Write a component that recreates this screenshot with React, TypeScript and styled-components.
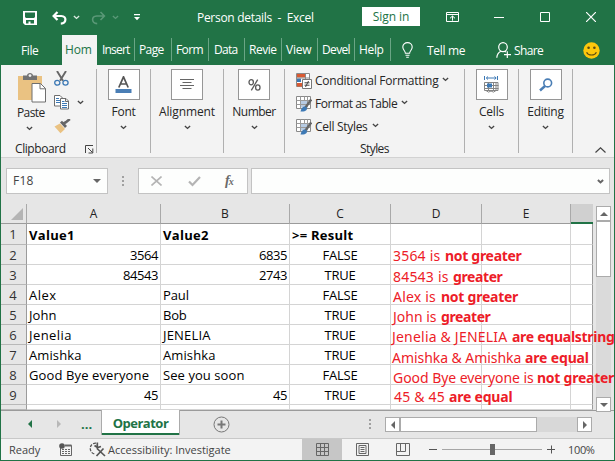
import React from "react";
import styled, { createGlobalStyle, css } from "styled-components";

const GREEN = "#217346";

const GlobalStyle = createGlobalStyle`
  * { box-sizing: border-box; }
  body { margin: 0; overflow: hidden; }
  svg { display: block; flex: none; }
`;

const Window = styled.div`
  width: 615px;
  height: 461px;
  display: flex;
  flex-direction: column;
  border: solid ${GREEN};
  border-width: 0 1px 1px;
  background: #e6e6e6;
  color: #262626;
  font: 12px/20px "Open Sans", "Noto Sans", sans-serif;
  overflow: hidden;
`;

const Text = styled.span<{ $ls?: number; $w?: number; $bold?: boolean }>`
  display: inline-block;
  white-space: pre;
  flex: none;
  letter-spacing: ${(p) => p.$ls ?? 0}px;
  ${(p) => p.$w !== undefined && css`width: ${p.$w}px;`}
  ${(p) => p.$bold && css`font-weight: 700;`}
`;

const Gap = styled.div<{ $w: number }>`
  flex: none;
  width: ${(p) => p.$w}px;
`;

/* ---------- title bar ---------- */
const TitleBar = styled.header`
  height: 35px;
  flex: none;
  display: flex;
  align-items: center;
  padding-left: 22px;
  background: ${GREEN};
  color: #fff;
`;
const SignIn = styled.button`
  width: 58px;
  height: 19px;
  margin: 0;
  padding: 0;
  border: 0;
  flex: none;
  align-self: flex-start;
  margin-top: 7px;
  background: #fff;
  color: ${GREEN};
  font: inherit;
  line-height: 19px;
`;
const WindowButtons = styled.div`
  display: flex;
  align-items: center;
  height: 33px;
  align-self: flex-start;
  margin-left: 26px;
`;

/* ---------- ribbon tabs ---------- */
const Tabs = styled.nav`
  height: 30px;
  flex: none;
  display: flex;
  align-items: center;
  background: ${GREEN};
  color: #fff;
  line-height: 29px;
`;
const Tab = styled.div<{ $w: number; $pad: number; $active?: boolean }>`
  width: ${(p) => p.$w}px;
  height: 30px;
  flex: none;
  padding-left: ${(p) => p.$pad}px;
  ${(p) =>
    p.$active
      ? css`background: #f3f3f3; color: ${GREEN};`
      : css`background: linear-gradient(#6aa585, #6aa585) right 3px / 1px 23px no-repeat;`}
`;
const FileTab = styled.div`
  width: 61px;
  padding-left: 20px;
`;

/* ---------- ribbon ---------- */
const Ribbon = styled.section`
  height: 93px;
  flex: none;
  display: flex;
  background: #f3f3f3;
  border-bottom: 1px solid #d2d2d2;
  padding-top: 4px;
`;
const Group = styled.div<{ $w: number }>`
  width: ${(p) => p.$w}px;
  height: 84px;
  flex: none;
  border-right: 1px solid #b0b0b0;
  display: flex;
  flex-direction: column;
  align-items: center;
`;
const IconBox = styled.div`
  width: 32px;
  height: 31px;
  border: 1px solid #969696;
  background: #fff;
  display: grid;
  place-items: center;
  flex: none;
`;
const GroupLabel = styled.div`
  height: 20px;
  margin: 2px 0 3px;
  display: flex;
  justify-content: center;
`;
const ClipboardBody = styled.div`
  display: flex;
  flex: none;
  width: 100%;
  height: 71px;
  padding-left: 15px;
`;
const PasteButton = styled.div`
  width: 31px;
  display: flex;
  flex-direction: column;
  align-items: flex-start;
  padding: 3px 0 0 1px;
`;
const PasteChevron = styled.div`
  margin: 3px 0 0 9px;
`;
const SmallTools = styled.div`
  display: flex;
  flex-direction: column;
  gap: 9px;
  padding: 2px 0 0 7px;
`;
const ToolRow = styled.div`
  display: flex;
  align-items: center;
  gap: 7px;
  height: 15px;
`;
const GroupFooter = styled.div`
  display: flex;
  flex: none;
  align-items: center;
  width: 100%;
  height: 18px;
  padding-left: 14px;
  gap: 19px;
`;
const StyleList = styled.div`
  display: flex;
  flex: none;
  flex-direction: column;
  width: 100%;
  padding: 0 0 0 11px;
  height: 70px;
`;
const StyleRow = styled.div`
  display: flex;
  align-items: center;
  height: 23px;
  gap: 3px;
  line-height: 19px;
`;
const StyleChevron = styled.div`
  padding: 0 0 2px 1px;
`;
const Collapse = styled.div`
  flex: 1;
  display: flex;
  align-items: flex-end;
  justify-content: flex-end;
  padding: 0 8px 4px 0;
`;

/* ---------- formula bar ---------- */
const FormulaBar = styled.section`
  height: 46px;
  flex: none;
  display: flex;
  padding: 10px 4px 0 5px;
  align-items: flex-start;
`;
const Field = styled.div<{ $w: number }>`
  width: ${(p) => p.$w}px;
  height: 26px;
  flex: none;
  border: 1px solid #c3c3c3;
  background: #fdfefd;
  display: flex;
  align-items: center;
  padding-left: 6px;
  color: #444;
`;
const Dots = styled.div<{ $w: number }>`
  width: ${(p) => p.$w}px;
  height: 26px;
  display: grid;
  place-items: center;
  flex: none;
`;
const Fx = styled.span`
  font: italic 700 14px/20px "Liberation Serif", serif;
  color: #6a6a6a;
  letter-spacing: -1px;
  small { font-size: 10px; }
`;

/* ---------- sheet ---------- */
const SheetArea = styled.section`
  position: relative;
  height: 206px;
  flex: none;
  display: flex;
`;
const Grid = styled.div`
  width: 592px;
  height: 206px;
  display: grid;
  grid-template-columns: 26px 134px 129px 101px 91px 89px 22px;
  grid-template-rows: 20px 21px repeat(8, 20px) 5px;
  overflow: hidden;
  font-size: 13px;
  color: #000;
`;
const HeadCell = styled.div<{ $selected?: boolean }>`
  text-align: center;
  line-height: 19px;
  font-size: 12px;
  color: #222;
  border-bottom: 1px solid #9b9b9b;
  border-right: 1px solid #a9a9a9;
  ${(p) => p.$selected && css`background: #d0d0d0; border-bottom: 2px solid ${GREEN}; border-right: 0;`}
`;
const Corner = styled(HeadCell)`
  padding: 4px 0 0 10px;
`;
const RowHead = styled.div`
  text-align: center;
  border-bottom: 1px solid #b8b8b8;
  border-right: 1px solid #9b9b9b;
  color: #333;
  line-height: 21px;
  padding-right: 1px;
`;
const Cell = styled.div<{ $align?: string; $last?: boolean; $bold?: boolean }>`
  background: #fff;
  border-right: 1px solid ${(p) => (p.$last ? "#9b9b9b" : "#d4d4d4")};
  border-bottom: 1px solid #d4d4d4;
  text-align: ${(p) => p.$align ?? "left"};
  padding: 0 2px;
  line-height: ${(p) => (p.$bold ? 22 : 20)}px;
  white-space: nowrap;
  overflow: hidden;
  font-weight: ${(p) => (p.$bold ? 700 : 400)};
`;
const ScrollColumn = styled.div`
  width: 15px;
  height: 206px;
  margin: 2px 0 0 3px;
  display: flex;
  flex-direction: column;
  background: #dadada;
`;
const ScrollButton = styled.div<{ $w?: number; $h?: number }>`
  width: ${(p) => p.$w ?? 15}px;
  height: ${(p) => p.$h ?? 15}px;
  border: 1px solid #ababab;
  background: #fff;
  display: grid;
  place-items: center;
  flex: none;
`;
const Spacer = styled.div`
  flex: 1;
`;
const Notes = styled.div`
  position: absolute;
  left: 391px;
  top: 42px;
  color: #ed1c28;
  font: 14px/20px "Noto Sans", sans-serif;
`;
const Note = styled.div<{ $x: number; $h: number }>`
  padding-left: ${(p) => p.$x}px;
  height: ${(p) => p.$h}px;
  white-space: nowrap;
`;

/* ---------- sheet tabs ---------- */
const SheetTabs = styled.section`
  height: 28px;
  flex: none;
  display: flex;
  align-items: flex-start;
  border-top: 1px solid #9b9b9b;
  padding-left: 25px;
`;
const Middle = styled.div`
  display: flex;
  align-items: center;
  height: 26px;
`;
const Ellipsis = styled.div`
  width: 20px;
  color: ${GREEN};
  font-weight: 700;
  line-height: 22px;
  font-size: 13px;
`;
const SheetTab = styled.div`
  width: 79px;
  height: 25px;
  margin-top: -1px;
  border: 1px solid #ababab;
  border-width: 0 1px;
  background: #fff linear-gradient(${GREEN}, ${GREEN}) 0 100% / 100% 2px no-repeat;
  color: ${GREEN};
  text-align: center;
  font-size: 13px;
  line-height: 26px;
`;
const ScrollRow = styled.div`
  display: flex;
  width: 207px;
  height: 15px;
  margin: 6px 0 0 14px;
  background: #d8d8d8;
`;

/* ---------- status bar ---------- */
const StatusBar = styled.footer`
  height: 22px;
  flex: none;
  display: flex;
  align-items: center;
  border-top: 1px solid #c8c8c8;
  background: #f3f3f3;
  padding-left: 8px;
  font-size: 11px;
  line-height: 18px;
  color: #444;
`;
const ActiveView = styled.div`
  width: 40px;
  height: 21px;
  background: #c6c6c6;
  display: grid;
  place-items: center;
`;
const ZoomTrack = styled.div`
  width: 100px;
  height: 11px;
  background: linear-gradient(#a6a6a6, #a6a6a6) 0 50% / 100% 1px no-repeat;
  display: flex;
  justify-content: center;
`;
const ZoomThumb = styled.div`
  width: 5px;
  height: 11px;
  background: #666;
`;

/* ---------- icons ---------- */
const Chevron = ({ color = "#444", w = 1.4 }: { color?: string; w?: number }) => (
  <svg width="7" height="5" viewBox="0 0 7 5" fill="none" stroke={color} strokeWidth={w}>
    <path d="M.9 1 3.5 3.4 6.1 1" />
  </svg>
);
const Triangle = ({ dir, color = "#666" }: { dir: "up" | "down" | "left" | "right"; color?: string }) => {
  const d = { up: "M0 6 4 2 8 6z", down: "M0 2 4 6 8 2z", left: "M6 0 2 4 6 8z", right: "M2 0 6 4 2 8z" }[dir];
  return (
    <svg width="8" height="8" viewBox="0 0 8 8" fill={color}>
      <path d={d} />
    </svg>
  );
};
const SaveIcon = () => (
  <svg width="14" height="14" viewBox="0 0 14 14" fill="#fff">
    <path fillRule="evenodd" d="M0 0H14V14H2L0 12zM2 1.500V6L3 7H11L12 6V1.500zM3 9V12.500H5.500V10.500H7.500V12.500H11V9z" />
  </svg>
);
const UndoIcon = ({ flip }: { flip?: boolean }) => (
  <svg width="15" height="14" viewBox="0 0 15 14" fill="none" stroke={flip ? "#5a9877" : "#fff"} strokeWidth={flip ? 1.6 : 2.2}>
    <g transform={flip ? "matrix(-1 0 0 1 15 0)" : undefined}>
      <path d="M5.5 1 1.6 5 5.5 9M2 5H9.2C15 5.4 14.7 12.2 8.8 12.6" />
    </g>
  </svg>
);
const MoreIcon = () => (
  <svg width="6" height="7" viewBox="0 0 6 7" fill="#fff">
    <path d="M0 0H6V1.2H0zM0 3H6L3 6.3z" />
  </svg>
);
const RibbonIcon = () => (
  <svg width="13" height="10" viewBox="0 0 13 10" fill="none" stroke="#fff">
    <path d="M.5.5h12v9H.5zM.5 2.5h12M6.5 8.7V4M4 6.3 6.5 4 9 6.3" />
  </svg>
);
const BulbIcon = () => (
  <svg width="11" height="16" viewBox="0 0 11 16" fill="none" stroke="#fff" strokeWidth="1.1">
    <path d="M3.4 11.3C3.3 8.8.8 8 .8 5a4.7 4.4 0 0 1 9.4 0c0 3-2.5 3.8-2.6 6.3zM3.5 13.3h4M4.2 15.2h2.6" />
  </svg>
);
const ShareIcon = () => (
  <svg width="16" height="17" viewBox="0 0 16 17" fill="none" stroke="#fff" strokeWidth="1.2">
    <ellipse cx="7" cy="5.1" rx="4.3" ry="4.5" />
    <path d="M.8 15.8C1 12 2.5 10.4 4.8 9.2M8.8 9.4 10 10M11.3 9.2V16M8 12.6h7" />
  </svg>
);
const Smiley = () => (
  <svg width="17" height="17" viewBox="0 0 17 17">
    <circle cx="8.5" cy="8.5" r="8.2" fill="#fdc70c" />
    <circle cx="5.6" cy="5.8" r="1.3" fill="#5b4a12" />
    <circle cx="11.4" cy="5.8" r="1.3" fill="#5b4a12" />
    <path d="M3.6 10.2C5.4 14 11.6 14 13.4 10.2" fill="none" stroke="#5b4a12" strokeWidth="1.1" />
  </svg>
);
const PasteIcon = () => (
  <svg width="29" height="31" viewBox="0 0 29 31">
    <path d="M1 4h24v24H1z" fill="#eac282" />
    <path d="M6 8V3.5h4C10 0 16 0 16 3.5h4V8z" fill="#737373" />
    <circle cx="13" cy="3.6" r="1.4" fill="#f3f3f3" />
    <path d="M15 11.5h8.5l5 5V30H15z" fill="#fff" stroke="#6e6e6e" />
    <path d="M23 11.5v5.3h5.5" fill="none" stroke="#6e6e6e" />
  </svg>
);
const CutIcon = () => (
  <svg width="15" height="15" viewBox="0 0 15 15" fill="none">
    <path d="M3 0 9 9.8M12 0 6 9.8" stroke="#666" strokeWidth="1.9" />
    <ellipse cx="3.3" cy="11.8" rx="2.6" ry="2.4" stroke="#3d79b5" strokeWidth="1.3" />
    <ellipse cx="11.5" cy="11.8" rx="2.6" ry="2.4" stroke="#3d79b5" strokeWidth="1.3" />
  </svg>
);
const CopyIcon = () => (
  <svg width="16" height="15" viewBox="0 0 16 15" fill="#fff" stroke="#6e6e6e">
    <path d="M.5.5H6L8.5 3v8h-8z" />
    <path d="M2 3.5h3M2 5.5h4M2 7.5h4" stroke="#3d79b5" />
    <path d="M6.5 3.5H12L14.5 6v8h-8zM11.5 3.5v3h3" />
    <path d="M8 6.5h2.5M8 8.5h5M8 10.5h5M8 12.5h5" stroke="#3d79b5" />
  </svg>
);
const BrushIcon = () => (
  <svg width="17" height="15" viewBox="0 0 17 15">
    <path d="M.5 7.5 6 4.5 11 10 6.5 14.200z" fill="#eac282" />
    <path d="M6 3.5 8 1.8 13 7 11 9z" fill="#666" />
    <path d="M9.5 4.5 12 3.200 15.800 0" fill="none" stroke="#666" strokeWidth="2.6" />
  </svg>
);
const LauncherIcon = () => (
  <svg width="9" height="9" viewBox="0 0 9 9" fill="none" stroke="#444">
    <path d="M.5 8V.5H8M3 3l4.5 4.5M7.8 3.5v4.5H3.5" />
  </svg>
);
const FontIcon = () => (
  <svg width="17" height="18" viewBox="0 0 17 18">
    <path d="M3.8 11.5 8.5.8l4.700 10.700M5.4 8h6.2" fill="none" stroke="#555" strokeWidth="1.7" />
    <path d="M.5 13h16v4h-16z" fill="#4a7eb5" />
  </svg>
);
const AlignIcon = () => (
  <svg width="14" height="11" viewBox="0 0 14 11" stroke="#666">
    <path d="M0 .5h14M2.5 3.5h9M0 6.5h14M2.5 9.5h9" />
  </svg>
);
const PercentIcon = () => (
  <svg width="13" height="12" viewBox="0 0 13 12" fill="none" stroke="#5a5a5a" strokeWidth="1.3">
    <ellipse cx="3.2" cy="3.3" rx="2.2" ry="2.6" />
    <ellipse cx="9.8" cy="8.5" rx="2.2" ry="2.6" />
    <path d="M9.7.7 3.3 11.3" />
  </svg>
);
const CondIcon = () => (
  <svg width="16" height="16" viewBox="0 0 16 16">
    <path d="M.5.5h13v13H.5z" fill="#fff" stroke="#8a8a8a" />
    <path d="M1 1h8v3.5H1z" fill="#d85a33" />
    <path d="M1 5.5h4v3.5H1z" fill="#3d79b5" />
    <path d="M1 10h5v3.5H1z" fill="#d85a33" />
    <path d="M9.5 1v5M.5 5h13" stroke="#8a8a8a" fill="none" />
    <path d="M6.5 6.5h9v9h-9z" fill="#fff" stroke="#777" />
    <path d="M8.5 9.8h5M8.5 12.2h5M12.5 8 9.5 14" stroke="#444" fill="none" />
  </svg>
);
const TableIcon = () => (
  <svg width="16" height="16" viewBox="0 0 16 16">
    <path d="M.5.5h14v12H.5z" fill="#fff" stroke="#8a8a8a" />
    <path d="M4 4.5h8v7H4z" fill="#b7cbe3" />
    <path d="M.5 4.5h14M.5 8.5h14M4.5.5v12M8.5.5v4M11.5.5v8" stroke="#9a9a9a" fill="none" />
    <path d="M9.5 11.5 15.2 3.5" stroke="#666" strokeWidth="2.4" />
    <path d="M4.5 15.5C5.5 11.5 7.5 9 10.5 11.3 12 14 9.5 16 4.5 15.5z" fill="#3d79b5" />
  </svg>
);
const CellsIcon = () => (
  <svg width="15" height="17" viewBox="0 0 15 17" fill="none">
    <path d="M.5 0v4M13.5 0v4M2.5 2h9.500M4 .5 2.3 2 4 3.5M10.5.5 12.2 2l-1.700 1.500" stroke="#3d79b5" />
    <path d="M.5 6.5h13.500v8H.5zM.5 9.5h14M.5 12.5h14M4.5 6.5v8M9.5 6.5v8M12 6.5v8M2 14.5q2.5 3 5 .5 2.5 2.5 5-.5" stroke="#858585" />
    <path d="M3 7.500h5v4H3z" fill="#3d79b5" />
  </svg>
);
const SearchIcon = () => (
  <svg width="14" height="14" viewBox="0 0 14 14" fill="none" stroke="#4a7eb5">
    <circle cx="8.7" cy="5" r="3.9" strokeWidth="1.6" />
    <path d="M6 8 1 12.5" strokeWidth="2.4" />
  </svg>
);
const VDots = ({ color = "#a0a0a0" }: { color?: string }) => (
  <svg width="2" height="10" viewBox="0 0 2 10" fill={color}>
    <path d="M0 0h2v2H0zM0 4h2v2H0zM0 8h2v2H0z" />
  </svg>
);
const AccessIcon = () => (
  <svg width="17" height="15" viewBox="0 0 17 15" fill="none" stroke="#555">
    <path d="M7 1.2C3 1 1 4 1.3 7c.2 2.5 2 4.5 4.2 5" strokeDasharray="3 1.3" strokeWidth="1.3" />
    <path d="M8.3.5v6M5.5 3.5l3 2 3.5-1M8 6.5 16 14M14.5 6.5 7.5 14" strokeWidth="1.7" />
  </svg>
);
const MacroIcon = () => (
  <svg width="13" height="13" viewBox="0 0 13 13" fill="none" stroke="#666">
    <path d="M1.500 5v7.500h11v-10H6" />
    <path d="M6 2.5h6.5" strokeWidth="2" />
    <path d="M3 6.5h8M3 8.500h8M3 10.500h8" strokeDasharray="2 1" />
    <circle cx="3" cy="3" r="2.8" fill="#555" stroke="none" />
  </svg>
);

type TabDef = { label: string; w: number; pad: number; ls: number };
const tabs: TabDef[] = [
  { label: "Insert", w: 37, pad: 4, ls: -0.8 },
  { label: "Page", w: 37, pad: 4, ls: -0.6 },
  { label: "Form", w: 37, pad: 4, ls: -0.6 },
  { label: "Data", w: 36, pad: 5, ls: -0.7 },
  { label: "Revie", w: 37, pad: 4, ls: -0.45 },
  { label: "View", w: 36, pad: 4, ls: -0.25 },
  { label: "Devel", w: 37, pad: 4, ls: -0.65 },
  { label: "Help", w: 36, pad: 4, ls: -0.35 },
];

const BoxGroup = ({ w, label, ls, children }: { w: number; label: string; ls: number; children: React.ReactNode }) => (
  <Group $w={w}>
    <IconBox>{children}</IconBox>
    <GroupLabel>
      <Text $ls={ls}>{label}</Text>
    </GroupLabel>
    <Chevron />
  </Group>
);

type Val = [string, number];
const rows: [Val, Val, Val][] = [
  [["3564", -0.45], ["6835", -0.45], ["FALSE", -0.2]],
  [["84543", -0.45], ["2743", -0.45], ["TRUE", -0.2]],
  [["Alex", 0.45], ["Paul", -0.1], ["FALSE", -0.2]],
  [["John", 0.1], ["Bob", -0.25], ["TRUE", -0.2]],
  [["Jenelia", 0.45], ["JENELIA", 0.2], ["TRUE", -0.2]],
  [["Amishka", 0.1], ["Amishka", 0.1], ["TRUE", -0.2]],
  [["Good Bye everyone", 0.12], ["See you soon", 0.07], ["FALSE", -0.2]],
  [["45", -0.45], ["45", -0.45], ["TRUE", -0.2]],
];

type NoteDef = { a: string; w: number; als: number; b: string; bls: number; x: number; h: number };
const notes: NoteDef[] = [
  { a: "3564 is ", w: 52, als: 0.2, b: "not greater", bls: -0.3, x: 1, h: 21 },
  { a: "84543 is ", w: 60, als: 0.2, b: "greater", bls: -0.4, x: 1, h: 20 },
  { a: "Alex is ", w: 48, als: 0.2, b: "not greater", bls: -0.25, x: 1, h: 20 },
  { a: "John is ", w: 48, als: 0, b: "greater", bls: -0.4, x: 1, h: 20 },
  { a: "Jenelia & JENELIA ", w: 120, als: 0.2, b: "are equalstring", bls: -0.27, x: 0, h: 21 },
  { a: "Amishka & Amishka ", w: 133, als: -0.05, b: "are equal", bls: -0.15, x: 0, h: 20 },
  { a: "Good Bye everyone is ", w: 144, als: -0.05, b: "not greater", bls: -0.25, x: 1, h: 19 },
  { a: "45 & 45 ", w: 55, als: 0.2, b: "are equal", bls: -0.2, x: 2, h: 20 },
];

export default function App() {
  return (
    <>
      <GlobalStyle />
      <Window>
        <TitleBar>
          <SaveIcon />
          <Gap $w={15} />
          <UndoIcon />
          <Gap $w={6} />
          <Chevron color="#dcebe2" />
          <Gap $w={11} />
          <UndoIcon flip />
          <Gap $w={6} />
          <Chevron color="#5a9877" />
          <Gap $w={15} />
          <MoreIcon />
          <Gap $w={57} />
          <Text $ls={-0.3} $w={165}>{"Person details  -  Excel"}</Text>
          <SignIn>
            <Text $ls={-0.05}>Sign in</Text>
          </SignIn>
          <WindowButtons>
            <RibbonIcon />
            <Gap $w={35} />
            <svg width="10" height="10" stroke="#fff"><path d="M0 5.5h10" /></svg>
            <Gap $w={36} />
            <svg width="10" height="10" stroke="#fff" fill="none"><path d="M.5.5h9v9h-9z" /></svg>
            <Gap $w={36} />
            <svg width="10" height="10" stroke="#fff" strokeWidth="1.2"><path d="M0 0 10 10M10 0 0 10" /></svg>
          </WindowButtons>
        </TitleBar>

        <Tabs>
          <FileTab><Text $ls={-0.4}>File</Text></FileTab>
          <Tab $w={35} $pad={3} $active>
            <Text $ls={-0.2}>Hom</Text>
          </Tab>
          <Gap $w={1} />
          {tabs.map((t) => (
            <Tab key={t.label} $w={t.w} $pad={t.pad}>
              <Text $ls={t.ls}>{t.label}</Text>
            </Tab>
          ))}
          <Gap $w={11} />
          <BulbIcon />
          <Gap $w={14} />
          <Text $ls={-0.3} $w={69}>Tell me</Text>
          <ShareIcon />
          <Gap $w={2} />
          <Text $ls={-0.65} $w={69}>Share</Text>
          <Smiley />
        </Tabs>

        <Ribbon>
          <Group $w={96}>
            <ClipboardBody>
              <PasteButton>
                <PasteIcon />
                <Text $ls={-0.6}>Paste</Text>
                <PasteChevron><Chevron /></PasteChevron>
              </PasteButton>
              <SmallTools>
                <ToolRow><CutIcon /></ToolRow>
                <ToolRow><CopyIcon /><Chevron /></ToolRow>
                <ToolRow><BrushIcon /></ToolRow>
              </SmallTools>
            </ClipboardBody>
            <GroupFooter>
              <Text $ls={-0.43}>Clipboard</Text>
              <LauncherIcon />
            </GroupFooter>
          </Group>
          <BoxGroup w={54} label="Font" ls={-0.25}><FontIcon /></BoxGroup>
          <BoxGroup w={73} label="Alignment" ls={-0.1}><AlignIcon /></BoxGroup>
          <BoxGroup w={61} label="Number" ls={-0.5}><PercentIcon /></BoxGroup>
          <Group $w={180}>
            <StyleList>
              <StyleRow><CondIcon /><Text $ls={-0.24}>Conditional Formatting</Text><StyleChevron><Chevron /></StyleChevron></StyleRow>
              <StyleRow><TableIcon /><Text $ls={-0.48}>Format as Table</Text><StyleChevron><Chevron /></StyleChevron></StyleRow>
              <StyleRow><TableIcon /><Text $ls={-0.3}>Cell Styles</Text><StyleChevron><Chevron /></StyleChevron></StyleRow>
            </StyleList>
            <Text $ls={-0.6}>Styles</Text>
          </Group>
          <BoxGroup w={54} label="Cells" ls={-0.2}><CellsIcon /></BoxGroup>
          <BoxGroup w={54} label="Editing" ls={-0.25}><SearchIcon /></BoxGroup>
          <Collapse>
            <svg width="11" height="6" fill="none" stroke="#444" strokeWidth="1.2"><path d="M.5 5.5 5.5.8l5 4.7" /></svg>
          </Collapse>
        </Ribbon>

        <FormulaBar>
          <Field $w={102}>
            <Text $ls={0.2} $w={80}>F18</Text>
            <Triangle dir="down" />
          </Field>
          <Dots $w={30}><VDots /></Dots>
          <Field $w={110}>
            <Gap $w={6} />
            <svg width="11" height="10" stroke="#b4b4b4" strokeWidth="1.6"><path d="M.5.5 10.5 9.5M10.5.5.5 9.5" /></svg>
            <Gap $w={26} />
            <svg width="13" height="11" stroke="#b4b4b4" strokeWidth="2.2" fill="none"><path d="M1 5.5 4.5 9 12 1" /></svg>
            <Gap $w={24} />
            <Fx>f<small>x</small></Fx>
          </Field>
          <Gap $w={3} />
          <Field $w={359}>
            <Gap $w={339} />
            <Chevron color="#666" w={2} />
          </Field>
        </FormulaBar>

        <SheetArea>
          <Grid>
            <Corner>
              <svg width="12" height="12" fill="#b4b4b4"><path d="M12 0V12H0z" /></svg>
            </Corner>
            {["A", "B", "C", "D", "E"].map((c) => <HeadCell key={c}>{c}</HeadCell>)}
            <HeadCell $selected />
            <RowHead>1</RowHead>
            <Cell $bold><Text $ls={0.3}>Value1</Text></Cell>
            <Cell $bold><Text $ls={0.3}>Value2</Text></Cell>
            <Cell $bold><Text $ls={0.25}>{">= Result"}</Text></Cell>
            <Cell />
            <Cell />
            <Cell $last />
            {rows.map((r, i) => (
              <React.Fragment key={i}>
                <RowHead>{i + 2}</RowHead>
                {r.map(([text, ls], c) => (
                  <Cell key={c} $align={c === 2 ? "center" : /^\d/.test(text) ? "right" : "left"}>
                    <Text $ls={ls}>{text}</Text>
                  </Cell>
                ))}
                <Cell />
                <Cell />
                <Cell $last />
              </React.Fragment>
            ))}
            <RowHead />
            <Cell /><Cell /><Cell /><Cell /><Cell /><Cell $last />
          </Grid>
          <ScrollColumn>
            <ScrollButton><Triangle dir="up" /></ScrollButton>
            <ScrollButton $h={56} />
            <Spacer />
            <ScrollButton><Triangle dir="down" /></ScrollButton>
          </ScrollColumn>
          <Notes>
            {notes.map((n, i) => (
              <Note key={i} $x={n.x} $h={n.h}>
                <Text $ls={n.als} $w={n.w}>{n.a}</Text>
                <Text $bold $ls={n.bls}>{n.b}</Text>
              </Note>
            ))}
          </Notes>
        </SheetArea>

        <SheetTabs>
          <Middle>
            <Triangle dir="left" color={GREEN} />
            <Gap $w={21} />
            <Triangle dir="right" color="#b8b8b8" />
            <Gap $w={18} />
            <Ellipsis>...</Ellipsis>
          </Middle>
          <SheetTab><Text $bold $ls={-0.5}>Operator</Text></SheetTab>
          <Gap $w={33} />
          <Middle>
            <svg width="17" height="17" fill="none" stroke="#777">
              <circle cx="8.5" cy="8.5" r="7.5" />
              <path d="M8.5 4.5v8M4.5 8.5h8" strokeWidth="2" />
            </svg>
            <Gap $w={139} />
            <VDots />
          </Middle>
          <ScrollRow>
            <ScrollButton><Triangle dir="left" /></ScrollButton>
            <ScrollButton $w={137} />
            <Spacer />
            <ScrollButton><Triangle dir="right" /></ScrollButton>
          </ScrollRow>
        </SheetTabs>

        <StatusBar>
          <Text $w={50}>Ready</Text>
          <MacroIcon />
          <Gap $w={17} />
          <AccessIcon />
          <Gap $w={2} />
          <Text $w={194}>Accessibility: Investigate</Text>
          <ActiveView>
            <svg width="13" height="13" fill="none" stroke="#666"><path d="M.5.5h12v12H.5zM4.5 0v13M8.5 0v13M0 4.5h13M0 8.5h13" /></svg>
          </ActiveView>
          <Gap $w={14} />
          <svg width="13" height="13" fill="none" stroke="#666"><path d="M.5.5h12v12H.5zM3 2.5h7v8H3zM4.5 4.5h4M4.5 6.5h4M4.5 8.5h4" /></svg>
          <Gap $w={27} />
          <svg width="14" height="13" fill="none" stroke="#666"><path d="M.5.5h13v12H.5zM4.5.5v8h5v-8M.5 8.5h4" /></svg>
          <Gap $w={19} />
          <svg width="8" height="9" stroke="#555"><path d="M0 4.5h8" /></svg>
          <Gap $w={5} />
          <ZoomTrack><ZoomThumb /></ZoomTrack>
          <Gap $w={5} />
          <svg width="8" height="9" stroke="#555"><path d="M0 4.5h8M4.5 .5v8" /></svg>
          <Gap $w={13} />
          <Text $ls={-0.35}>100%</Text>
        </StatusBar>
      </Window>
    </>
  );
}
